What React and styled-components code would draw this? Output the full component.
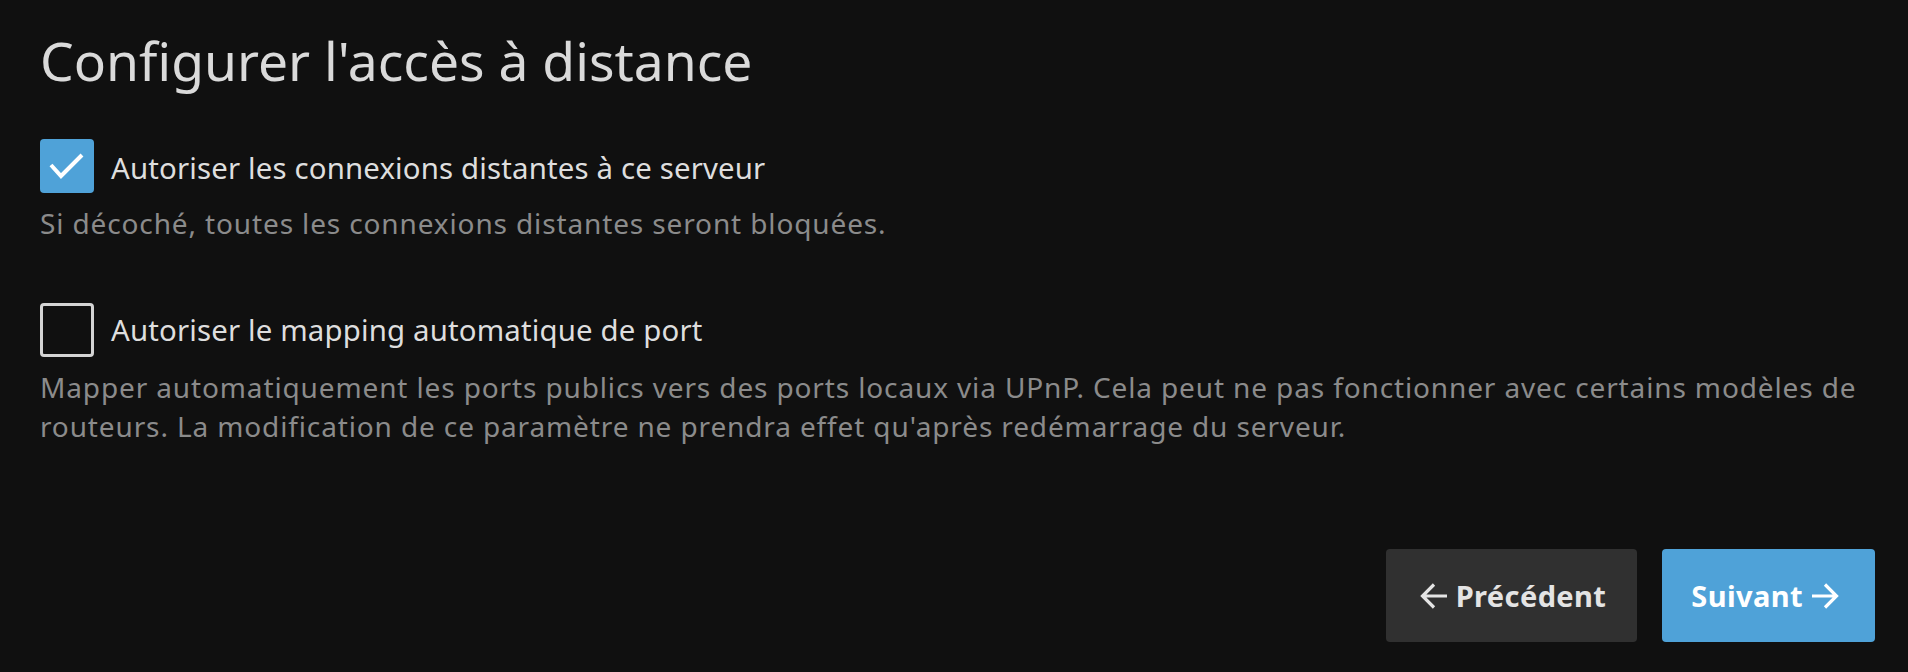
import React, { useState } from 'react';
import styled, { createGlobalStyle } from 'styled-components';

const GlobalStyle = createGlobalStyle`
  html, body {
    margin: 0;
    padding: 0;
    background: #101010;
  }
  body {
    font-family: "Noto Sans", "Liberation Sans", sans-serif;
    color: #dcdcdc;
  }
`;

const Page = styled.div`
  display: flex;
  flex-direction: column;
  min-height: 100vh;
  box-sizing: border-box;
  padding: 28px 33px 30px 40px;
`;

const Title = styled.h1`
  margin: 0;
  font-size: 53.4px;
  line-height: 66px;
  font-weight: 400;
  color: #dadada;
`;

const Field = styled.div`
  margin-top: ${({ $gap }) => $gap}px;
`;

const CheckRow = styled.label`
  display: flex;
  align-items: center;
  gap: 17px;
  cursor: pointer;
`;

const Box = styled.span`
  flex: none;
  width: 54px;
  height: 54px;
  box-sizing: border-box;
  border-radius: 4px;
  display: flex;
  align-items: center;
  justify-content: center;
  background: ${({ $checked }) => ($checked ? '#4fa2d8' : 'transparent')};
  border: ${({ $checked }) => ($checked ? 'none' : '3px solid #d4d4d4')};
`;

const Label = styled.span`
  font-size: 29.4px;
  letter-spacing: 0.15px;
  line-height: 40px;
  color: #dedede;
  padding-top: ${({ $nudge }) => $nudge || 0}px;
`;

const Description = styled.div`
  margin-top: 11px;
  margin-right: -25px;
  font-size: 28px;
  letter-spacing: 0.87px;
  line-height: 39.6px;
  color: #8b8b8b;
`;

const Footer = styled.div`
  margin-top: auto;
  display: flex;
  justify-content: flex-end;
  gap: 25px;
`;

const Button = styled.button`
  height: 93px;
  display: flex;
  align-items: center;
  gap: 8px;
  padding: ${({ $primary }) => ($primary ? '0 36px 0 29px' : '0 31px 0 34px')};
  border: none;
  border-radius: 4px;
  font-family: inherit;
  font-size: 29px;
  letter-spacing: 0.4px;
  font-weight: 700;
  cursor: pointer;
  background: ${({ $primary }) => ($primary ? '#4fa2d8' : '#303030')};
  color: ${({ $primary }) => ($primary ? '#ffffff' : '#e4e4e4')};
`;

const Check = () => (
  <svg width="38" height="30" viewBox="0 0 38 30" aria-hidden="true">
    <path d="M3 14 L13 25 L34 4" fill="none" stroke="#fff" strokeWidth="4" />
  </svg>
);

const Arrow = ({ dir }) => (
  <svg width="28" height="28" viewBox="0 0 28 28" aria-hidden="true">
    {dir === 'left' ? (
      <path d="M27 14 H3 M14 2.5 L2.5 14 L14 25.5" fill="none" stroke="currentColor" strokeWidth="3.2" />
    ) : (
      <path d="M1 14 H25 M14 2.5 L25.5 14 L14 25.5" fill="none" stroke="currentColor" strokeWidth="3.2" />
    )}
  </svg>
);

const CheckboxField = ({ checked, onToggle, label, children, gap, nudge }) => (
  <Field $gap={gap}>
    <CheckRow onClick={onToggle}>
      <Box $checked={checked}>{checked && <Check />}</Box>
      <Label $nudge={nudge}>{label}</Label>
    </CheckRow>
    <Description>{children}</Description>
  </Field>
);

export default function App() {
  const [remote, setRemote] = useState(true);
  const [upnp, setUpnp] = useState(false);

  return (
    <>
      <GlobalStyle />
      <Page>
        <Title>Configurer l'accès à distance</Title>

        <CheckboxField
          gap={45}
          nudge={3}
          checked={remote}
          onToggle={() => setRemote(v => !v)}
          label="Autoriser les connexions distantes à ce serveur"
        >
          Si décoché, toutes les connexions distantes seront bloquées.
        </CheckboxField>

        <CheckboxField
          gap={59}
          checked={upnp}
          onToggle={() => setUpnp(v => !v)}
          label="Autoriser le mapping automatique de port"
        >
          Mapper automatiquement les ports publics vers des ports locaux via UPnP. Cela peut ne pas fonctionner avec certains modèles de routeurs. La modification de ce paramètre ne prendra effet qu'après redémarrage du serveur.
        </CheckboxField>

        <Footer>
          <Button type="button">
            <Arrow dir="left" />
            Précédent
          </Button>
          <Button type="button" $primary>
            Suivant
            <Arrow dir="right" />
          </Button>
        </Footer>
      </Page>
    </>
  );
}
